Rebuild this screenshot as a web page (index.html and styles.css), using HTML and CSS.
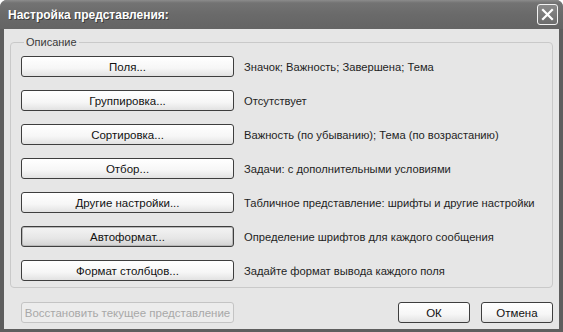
FILE: index.html
```html
<!DOCTYPE html>
<html lang="ru">
<head>
    <meta charset="UTF-8">
    <title>Настройка представления</title>
    <link rel="stylesheet" href="styles.css">
</head>
<body>
    <div class="window">
        <div class="titlebar">
            <span class="title">Настройка представления:</span>
            <button class="close-button" aria-label="Закрыть">
                <svg width="13" height="13" viewBox="0 0 13 13">
                    <path d="M2 2 L11 11 M11 2 L2 11" stroke="#fff" stroke-width="2.2" stroke-linecap="square"/>
                </svg>
            </button>
        </div>

        <div class="content">
            <fieldset class="group">
                <legend>Описание</legend>

                <div class="row">
                    <button class="btn wide">Поля...</button>
                    <span class="desc">Значок; Важность; Завершена; Тема</span>
                </div>
                <div class="row">
                    <button class="btn wide">Группировка...</button>
                    <span class="desc">Отсутствует</span>
                </div>
                <div class="row">
                    <button class="btn wide">Сортировка...</button>
                    <span class="desc">Важность (по убыванию); Тема (по возрастанию)</span>
                </div>
                <div class="row">
                    <button class="btn wide">Отбор...</button>
                    <span class="desc">Задачи: с дополнительными условиями</span>
                </div>
                <div class="row">
                    <button class="btn wide">Другие настройки...</button>
                    <span class="desc">Табличное представление: шрифты и другие настройки</span>
                </div>
                <div class="row">
                    <button class="btn wide focused">Автоформат...</button>
                    <span class="desc">Определение шрифтов для каждого сообщения</span>
                </div>
                <div class="row">
                    <button class="btn wide">Формат столбцов...</button>
                    <span class="desc">Задайте формат вывода каждого поля</span>
                </div>
            </fieldset>

            <div class="footer">
                <button class="btn wide" disabled>Восстановить текущее представление</button>
                <div class="footer-right">
                    <button class="btn small">ОК</button>
                    <button class="btn small">Отмена</button>
                </div>
            </div>
        </div>
    </div>
</body>
</html>
```

FILE: styles.css
```css
body {
    margin: 0;
    font-family: 'Liberation Sans', Arial, sans-serif;
    font-size: 11px;
    color: #1a1a1a;
}

.window {
    width: 563px;
    height: 332px;
    display: flex;
    flex-direction: column;
    background-color: #5e5e5e;
    border-radius: 7px 7px 0 0;
    overflow: hidden;
}

.titlebar {
    height: 29px;
    display: flex;
    align-items: center;
    justify-content: space-between;
    padding: 0 5px 0 8px;
    background: linear-gradient(to bottom, #8c8c8c 0%, #737373 10%, #6a6a6a 50%, #646464 100%);
}

.title {
    color: #fff;
    font-weight: bold;
    font-size: 12px;
    text-shadow: 1px 1px 0 #3c3c3c;
}

.close-button {
    width: 21px;
    height: 21px;
    padding: 0;
    display: flex;
    align-items: center;
    justify-content: center;
    border: 1px solid #f2f2f2;
    border-radius: 3px;
    background: linear-gradient(to bottom, #8a8a8a, #6c6c6c);
}

.content {
    flex: 1;
    margin: 0 4px 3px 4px;
    padding: 7px 6px 6px 6px;
    background-color: #e6e6e6;
    display: flex;
    flex-direction: column;
}

.group {
    margin: 0;
    padding: 7px 10px 6px 10px;
    border: 1px solid #c9c9c9;
    border-radius: 4px;
    display: flex;
    flex-direction: column;
    gap: 13px;
}

.group legend {
    padding: 0 2px;
    margin-left: 3px;
    line-height: 13px;
    color: #3a3a3a;
}

.row {
    display: flex;
    align-items: center;
    gap: 10px;
}

.btn {
    height: 21px;
    padding: 0;
    font-family: inherit;
    font-size: 11.5px;
    color: #111;
    white-space: nowrap;
    border: 1px solid #3e3e3e;
    border-radius: 3px;
    background: linear-gradient(to bottom, #ffffff 0%, #f6f6f6 60%, #e2e2e2 100%);
}

.btn.wide {
    width: 213px;
}

.btn.small {
    width: 72px;
}

.btn.focused {
    background: linear-gradient(to bottom, #f4f4f4 0%, #e6e6e6 60%, #d2d2d2 100%);
    box-shadow: inset 0 0 0 1px #b8b8b8;
}

.btn:disabled {
    color: #a8a8a8;
    border-color: #c4c4c4;
    background: #ececec;
}

.desc {
    color: #1e1e1e;
    font-size: 11.2px;
    white-space: nowrap;
}

.footer {
    margin-top: 14px;
    display: flex;
    justify-content: space-between;
    padding-left: 11px;
}

.footer-right {
    display: flex;
    gap: 11px;
}
```
